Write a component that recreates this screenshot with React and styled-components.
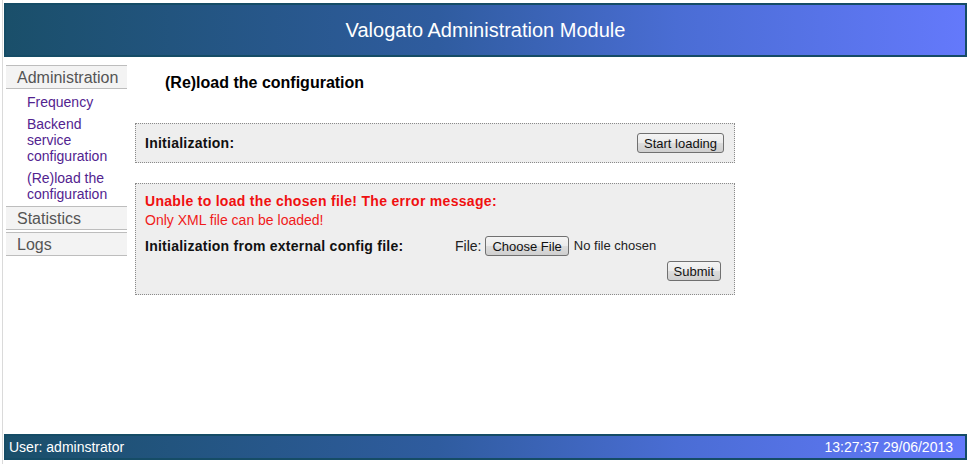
import React from "react"
import styled, { createGlobalStyle } from "styled-components"

const GlobalStyle = createGlobalStyle`
  html, body {
    margin: 0;
    padding: 0;
    background: #fff;
    font-family: "Liberation Sans", Arial, sans-serif;
  }
`

const Page = styled.div`
  box-sizing: border-box;
  min-height: 100vh;
  margin-left: 2px;
  border-left: 1px solid #dadada;
  padding: 3px 3px 4px 1px;
  display: flex;
  flex-direction: column;
`

const Bar = styled.div`
  border: 2px solid #154c66;
  background: linear-gradient(90deg, #1a4f6a 0%, #2f5c9f 45%, #4a6dd4 70%, #6479fb 100%);
  color: #fff;
`

const Header = styled(Bar)`
  box-sizing: border-box;
  height: 54px;
  padding-top: 1px;
  display: flex;
  align-items: center;
  justify-content: center;
  font-size: 20px;
`

const Footer = styled(Bar)`
  margin-top: auto;
  height: 22px;
  display: flex;
  align-items: center;
  justify-content: space-between;
  padding: 0 12px 0 3px;
  font-size: 14px;
`

const Body = styled.div`
  display: flex;
  gap: 8px;
  padding: 8px 0 0 2px;
`

const Sidebar = styled.nav`
  width: 121px;
  flex-shrink: 0;
`

const MenuHeader = styled.div`
  height: 22px;
  line-height: 23px;
  border-top: 1px solid #bdbdbd;
  border-bottom: 1px solid #bdbdbd;
  background: #f3f3f3;
  color: #555;
  font-size: 16px;
  padding-left: 11px;
  margin-top: ${(p) => (p.$first ? "0" : "2px")};
`

const SubMenu = styled.ul`
  list-style: none;
  margin: 0;
  padding: 5px 0 2px 21px;
`

const SubItem = styled.li`
  font-size: 14px;
  line-height: 16px;
  color: #52238f;
  margin-bottom: 6px;

  &:last-child {
    margin-bottom: 0;
  }
`

const Main = styled.main`
  width: 600px;
`

const Title = styled.h3`
  margin: 9px 0 31px 30px;
  font-size: 16px;
  line-height: 18px;
  font-weight: bold;
  color: #000;
`

const Panel = styled.section`
  border: 1px dotted #8a8a8a;
  background: #eeeeee;
  margin-bottom: 20px;
  padding: ${(p) => p.$pad};
  font-size: 14px;
  line-height: 16px;
`

const SplitRow = styled.div`
  display: flex;
  align-items: center;
  justify-content: space-between;
`

const Label = styled.span`
  font-weight: bold;
  letter-spacing: 0.25px;
  color: #111;
`

const ErrorTitle = styled.div`
  color: #f01010;
  font-weight: bold;
  letter-spacing: 0.3px;
  margin-bottom: 3px;
`

const ErrorText = styled.div`
  color: #f01a1a;
  margin-bottom: 8px;
`

const FileRow = styled.div`
  display: grid;
  grid-template-columns: 310px auto;
  align-items: center;
  height: 20px;
`

const FileField = styled.div`
  display: flex;
  align-items: center;
  color: #222;
`

const FileName = styled.span`
  font-size: 13px;
`

const Button = styled.button`
  box-sizing: border-box;
  height: 20px;
  padding: 0 6px;
  font-family: "Liberation Sans", Arial, sans-serif;
  font-size: 13px;
  color: #111;
  border: 1px solid #707070;
  border-radius: 3px;
  background: linear-gradient(#f4f4f4 0%, #ebebeb 50%, #dddddd 51%, #cfcfcf 100%);
  margin: ${(p) => p.$margin || "0"};
`

const SubmitRow = styled.div`
  display: flex;
  justify-content: flex-end;
  margin-top: 5px;
  padding-right: 3px;
`

export default function App() {
  return (
    <>
      <GlobalStyle />
      <Page>
        <Header>Valogato Administration Module</Header>
        <Body>
          <Sidebar>
            <MenuHeader $first>Administration</MenuHeader>
            <SubMenu>
              <SubItem>Frequency</SubItem>
              <SubItem>Backend service configuration</SubItem>
              <SubItem>(Re)load the configuration</SubItem>
            </SubMenu>
            <MenuHeader>Statistics</MenuHeader>
            <MenuHeader>Logs</MenuHeader>
          </Sidebar>
          <Main>
            <Title>(Re)load the configuration</Title>
            <Panel $pad="9px 10px 9px 9px">
              <SplitRow>
                <Label>Initialization:</Label>
                <Button>Start loading</Button>
              </SplitRow>
            </Panel>
            <Panel $pad="9px 10px 13px 9px">
              <ErrorTitle>Unable to load the chosen file! The error message:</ErrorTitle>
              <ErrorText>Only XML file can be loaded!</ErrorText>
              <FileRow>
                <Label>Initialization from external config file:</Label>
                <FileField>
                  File:
                  <Button $margin="0 5px 0 4px">Choose File</Button>
                  <FileName>No file chosen</FileName>
                </FileField>
              </FileRow>
              <SubmitRow>
                <Button>Submit</Button>
              </SubmitRow>
            </Panel>
          </Main>
        </Body>
        <Footer>
          <span>User: adminstrator</span>
          <span>13:27:37 29/06/2013</span>
        </Footer>
      </Page>
    </>
  )
}
